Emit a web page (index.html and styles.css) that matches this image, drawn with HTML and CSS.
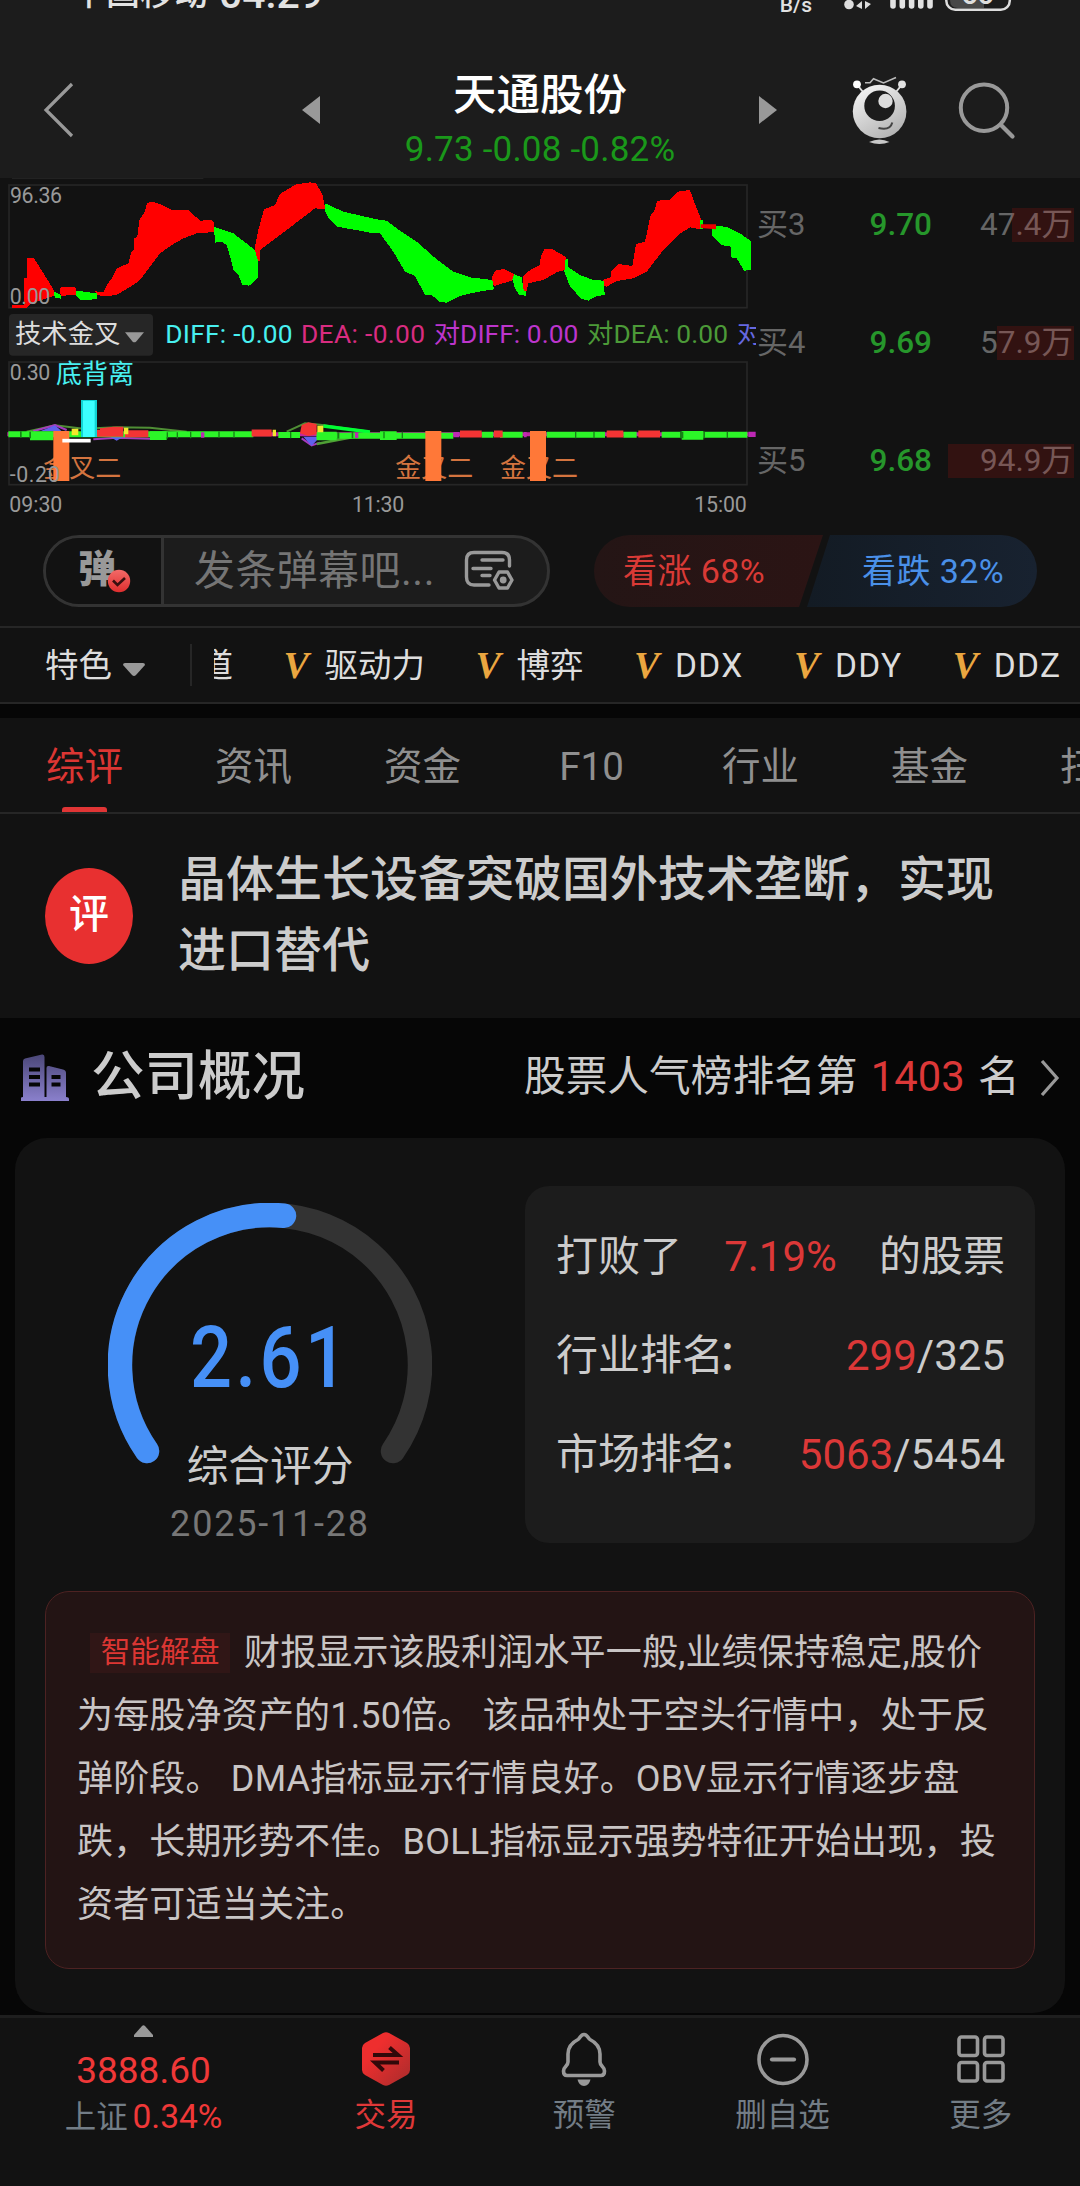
FILE: index.html
```html
<!DOCTYPE html>
<html lang="zh-CN">
<head>
<meta charset="utf-8">
<title>天通股份</title>
<link rel="stylesheet" href="styles.css">
</head>
<body>
<header class="top">
  <div class="status">
    <div class="status-left"><span class="carrier">中国移动</span><span class="clock">04:29</span></div>
    <div class="status-right">
      <span class="speed">B/s</span>
      <svg class="signal" width="170" height="14" viewBox="842 0 170 14">
        <circle cx="849" cy="4.5" r="4.8" fill="#ddd"/>
        <path d="M856 6l6-5v8zM871 4l-6 5v-8z" fill="#ddd"/>
        <path d="M893 -4V6M902.300 -4V6M911.600 -4V6M920.800 -4V6M930 -4V6" stroke="#e2e2e2" stroke-width="5.600" stroke-linecap="round"/>
        <path d="M950 -6H984V8H958Q950 8 950 0Z" fill="#484848"/>
        <rect x="946.300" y="-25" width="63.500" height="34.800" rx="9" fill="none" stroke="#ddd" stroke-width="2.500"/>
        <text x="977.500" y="4" text-anchor="middle" class="battery-text">66</text>
      </svg>
    </div>
  </div>
  <div class="title-bar">
    <svg class="icon-back" width="34" height="60" viewBox="0 0 34 60"><path d="M29 4L3 30L29 56" fill="none" stroke="#999" stroke-width="3.200"/></svg>
    <svg class="icon-prev" width="18" height="28" viewBox="0 0 18 28"><path d="M18 0V28L0 14Z" fill="#999"/></svg>
    <div class="stock">
      <h1>天通股份</h1>
      <p>9.73 -0.08 -0.82%</p>
    </div>
    <svg class="icon-next" width="18" height="28" viewBox="0 0 18 28"><path d="M0 0V28L18 14Z" fill="#999"/></svg>
    <svg class="icon-bot" width="60" height="72" viewBox="850 74 60 72">
      <defs><linearGradient id="bot" x1="0" y1="0" x2=".6" y2="1"><stop offset="0" stop-color="#fafafa"/><stop offset="1" stop-color="#b5b5b5"/></linearGradient></defs>
      <path d="M857 84.500L863 92M902 84.500L896 92" stroke="#ddd" stroke-width="2"/>
      <circle cx="857" cy="84.300" r="3.900" fill="#fff"/><circle cx="902" cy="84.300" r="3.900" fill="#e2e2e2"/>
      <path d="M865 82.700H870L873.500 78.700L883.500 83L896 77.500" fill="none" stroke="#bbb" stroke-width="1.600"/>
      <circle cx="879.600" cy="111.500" r="26.800" fill="url(#bot)"/>
      <circle cx="879.600" cy="105.800" r="15.300" fill="#1c1c1c"/>
      <circle cx="885.500" cy="101" r="7.200" fill="#ddd"/>
      <path d="M878.500 128Q890 131 892.300 122.500" fill="none" stroke="#444" stroke-width="2"/>
      <path d="M869 142Q879.500 137 889.500 142Q879.500 146 869 142Z" fill="#c8c8c8"/>
    </svg>
    <svg class="icon-search" width="60" height="60" viewBox="956 80 60 60"><circle cx="984" cy="107.700" r="23.200" fill="none" stroke="#999" stroke-width="4"/><path d="M1001 125L1012.500 136.500" stroke="#999" stroke-width="4.200" stroke-linecap="round"/></svg>
  </div>
</header>

<section class="market">
  <svg class="chart" width="756" height="340" viewBox="0 24 2268 1020">
    <g fill="none" stroke="#262626" stroke-width="5">
      <path d="M36 25H610" stroke-width="3"/>
      <rect x="27" y="45" width="2214" height="368"/>
      <rect x="27" y="576" width="2214" height="368"/>
    </g>
    <g fill="#f00" shape-rendering="crispEdges">
      <path d="M36 405H72V325H80V265H102L115 285L140 325L152 345L162 362V378L95 400L80 414H36Z"/>
      <path d="M180 356L186 350H222L228 356V374L182 378Z"/>
      <path d="M286 364L310 366L318 350L335 325L350 295L385 280L394 245L403 240V205L412 200L418 150L432 130L442 98L460 96L480 102L515 120L565 120L600 152L635 150L643 160V185L620 188L590 190L550 205L515 225L480 250L450 290L420 330L400 345L350 375L325 378L290 376Z"/>
      <path d="M764 235L775 180L792 118L825 105L840 72L888 43L930 37L948 40L968 75L976 118L945 115L860 180L780 240V272H768Z"/>
      <path d="M1477 320L1485 302L1512 297L1542 312V330L1485 347L1477 345Z"/>
      <path d="M1570 318L1582 305L1620 285L1622 262L1632 238L1655 236L1699 262L1700 298L1670 307L1630 330L1583 340L1582 365L1570 362Z"/>
      <path d="M1808 330L1832 322V305L1855 282L1897 288L1908 222L1935 215L1952 135L1962 125L1972 92L2010 90L2035 65L2070 60L2082 95L2102 145V178L2070 172L2042 190L1990 240L1940 305L1900 325L1850 333L1820 350L1808 345Z"/>
    </g>
    <g fill="#0f0" shape-rendering="crispEdges">
      <path d="M162 364L182 375V386L164 382Z"/>
      <path d="M228 362L290 370V388L240 390L228 375Z"/>
      <path d="M642 170L700 190L765 240L773 270V325L748 347L727 345L715 315L700 300L692 265L680 225L665 215L645 218Z"/>
      <path d="M975 100L1030 125L1130 148L1160 152L1190 175L1250 215L1310 268L1360 305L1410 322L1477 330L1482 358L1430 366L1380 378L1340 398L1320 396L1295 375H1275L1245 318L1215 305L1180 245L1140 190L1110 188L1080 182L1010 170L985 145L975 122Z"/>
      <path d="M1537 328L1542 312L1565 322L1571 360L1577 364V377L1558 375L1545 355Z"/>
      <path d="M1697 265L1703 268V290L1740 315L1780 330L1812 332L1814 375L1790 378L1765 392L1745 387L1710 350L1693 305Z"/>
      <path d="M2100 150H2110V178H2100Z"/>
      <path d="M2137 168L2180 170L2220 190L2252 213V300L2232 302L2210 265L2192 262V230L2165 225L2137 198Z"/>
    </g>
    <path d="M2102 163H2148V178L2102 174Z" fill="#e00"/>

    <g fill="#d4743f" class="mark">
      <text x="130" y="922">金叉二</text>
      <text x="1186" y="922">金叉二</text>
      <text x="1500" y="922">金叉二</text>
    </g>
    <path d="M80 785L165 766L250 776L350 772L450 773L560 785M860 785L915 760L960 764L1100 784" fill="none" stroke="#4f8f35" stroke-width="6"/>
    <path d="M100 784L165 765L200 780M280 808L350 803L450 806M905 805L935 826L960 818" fill="none" stroke="#a63ac0" stroke-width="6"/>
    <path d="M22 793H2245" stroke="#c026a0" stroke-width="12"/>
    <path d="M120 784L165 766L185 784ZM330 800L350 812L370 800ZM910 800L935 828L960 800Z" fill="#6060ee"/>
    <path d="M950 822L1080 797" stroke="#4f9f35" stroke-width="8"/>
    <path d="M970 768L1110 786" stroke="#0f3" stroke-width="10"/>
    <path d="M25 793H760M835 795H900M950 797H1360M1445 794H1480M1500 794H1568M1640 794H1815M1870 794H1910M1985 794H2242" stroke="#2cf528" stroke-width="18"/>
    <path d="M90 798H160M450 797H500M950 798H1010M1140 797H1190M2045 796H2110" stroke="#2cf528" stroke-width="26"/>
    <path d="M60 793H65M88 795H93M500 796H504M530 796H534M570 795H574M655 794H659M700 794H704M870 795H874M1012 796H1018M1055 795H1060M1150 795H1154M1205 795H1209M1725 795H1729M1780 795H1784M2040 795H2050M2110 795H2115M2180 795H2184" stroke="#168016" stroke-width="19"/>
    <path d="M285 790H300M375 791H445M755 789H815M1380 792H1445M1482 792H1508M1820 792H1870M1915 792H1980" stroke="#f43434" stroke-width="21"/>
    <path d="M300 775L340 770H370V800H300ZM905 765L925 757L950 762V793L925 798L900 790Z" fill="#f43434"/>
    <path d="M372 783H385M215 786H235M952 777H970M818 789H828" stroke="#f4e82c" stroke-width="20"/>
    <path d="M603 795H613M1065 796H1075M1360 794H1378M1572 794H1580M2245 793H2267" stroke="#bd28b4" stroke-width="16"/>
    <rect x="243" y="690" width="48" height="111" fill="#10d4d4"/><rect x="249" y="693" width="35" height="108" fill="#3cffff"/>
    <g fill="#ff7838"><rect x="160" y="783" width="48" height="150"/><rect x="1276" y="783" width="48" height="150"/><rect x="1590" y="783" width="48" height="150"/></g>
    <path d="M187 812H272" stroke="#fff" stroke-width="11"/>

    <g class="axis" fill="#999">
      <text x="30" y="98" textLength="156">96.36</text>
      <text x="29" y="403" textLength="122">0.00</text>
      <text x="29" y="629" textLength="122">0.30</text>
      <text x="29" y="935" textLength="150">-0.20</text>
      <text x="28" y="1025" textLength="159">09:30</text>
      <text x="1056" y="1025" textLength="157">11:30</text>
      <text x="2083" y="1025" textLength="157">15:00</text>
    </g>
    <rect x="27" y="432" width="432" height="125" rx="12" fill="#262626"/>
    <path d="M375 487H432L408 515Q403 519 398 515Z" fill="#999"/>
    <g class="legend">
      <text x="45" y="520" fill="#ddd">技术金叉</text>
      <text x="496" y="518" fill="#48f0f0" textLength="382">DIFF: -0.00</text>
      <text x="903" y="518" fill="#d92c80" textLength="372">DEA: -0.00</text>
      <text x="1301" y="518" fill="#bd35cc" textLength="434">对DIFF: 0.00</text>
      <text x="1761" y="518" fill="#4c9a38" textLength="423">对DEA: 0.00</text>
      <text x="2211" y="518" fill="#6668e0">对</text>
      <text x="168" y="640" fill="#48f0f0" class="mark">底背离</text>
    </g>
  </svg>
  <ul class="orders">
    <li><span>买3</span><b>9.70</b><em>47.4万<i style="width:62px"></i></em></li>
    <li><span>买4</span><b>9.69</b><em>57.9万<i style="width:77px"></i></em></li>
    <li><span>买5</span><b>9.68</b><em>94.9万<i style="width:126px"></i></em></li>
  </ul>
</section>

<section class="social">
  <div class="danmu">
    <div class="danmu-toggle">弹
      <svg class="check" width="24" height="24" viewBox="0 0 24 24"><defs><linearGradient id="chk" x1="0" y1="0" x2="0" y2="1"><stop offset="0" stop-color="#f36a68"/><stop offset="1" stop-color="#df2e2e"/></linearGradient></defs><circle cx="12" cy="12" r="11.200" fill="url(#chk)"/><path d="M6 11.500L10.500 16L18 9" fill="none" stroke="#3a0f0f" stroke-width="2.600"/></svg>
    </div>
    <div class="danmu-input"><span>发条弹幕吧...</span>
      <svg width="50" height="42" viewBox="464 551 50 42" fill="none" stroke="#999" stroke-width="3.400" stroke-linecap="round" stroke-linejoin="round"><path d="M509.500 567V561Q509.500 553.500 502 553.500H474Q466.500 553.500 466.500 561V578Q466.500 586 474 586H489M482 561H503M473 569.500H491M482 576.500H490"/><path d="M494.500 581L499 573H507.500L512 581L507.500 589H499Z"/><circle cx="503.200" cy="581" r="1.700"/></svg>
    </div>
  </div>
  <div class="vote"><div class="vote-up">看涨 68%</div><div class="vote-down">看跌 32%</div></div>
</section>

<section class="features">
  <div class="feature-pick">特色<svg width="22" height="14" viewBox="0 0 22 14"><path d="M0 2Q0 0 2 0H20Q22 0 22 2L13 12Q11 14 9 12Z" fill="#999"/></svg></div>
  <div class="feature-list">
    <span class="cut">道</span>
    <span><i>V</i>驱动力</span><span><i>V</i>博弈</span><span class="latin"><i>V</i>DDX</span><span class="latin"><i>V</i>DDY</span><span class="latin"><i>V</i>DDZ</span>
  </div>
</section>

<nav class="tabs"><a class="active">综评</a><a>资讯</a><a>资金</a><a>F10</a><a>行业</a><a>基金</a><a>扫雷</a></nav>

<section class="comment"><div class="badge">评</div><p>晶体生长设备突破国外技术垄断，实现<br>进口替代</p></section>

<section class="company">
  <div class="company-head">
    <svg width="50" height="50" viewBox="20 1053 50 50"><defs><linearGradient id="bld" x1="0" y1="0" x2="0" y2="1"><stop offset="0" stop-color="#4b4778"/><stop offset="1" stop-color="#8a80cc"/></linearGradient></defs><path fill="url(#bld)" fill-rule="evenodd" d="M21 1101V1098Q21 1097 23 1097V1061Q23 1059 25 1058.500L42 1054.500Q44.500 1054 44.500 1057V1097H46.500V1068Q46.500 1065.500 49 1066L63 1069.500Q66 1070 66 1073V1097Q69 1097 69 1099V1101ZM29 1067.500V1071.500H40V1067.500ZM29 1075V1079H40V1075ZM29 1082.500V1086.500H40V1082.500ZM51.500 1075V1079H60.500V1075ZM51.500 1082.500V1086.500H60.500V1082.500Z"/></svg>
    <h2>公司概况</h2>
    <p>股票人气榜排名第 <b>1403</b> 名</p>
    <svg width="20" height="36" viewBox="0 0 20 36"><path d="M2 1L17 18L2 35" fill="none" stroke="#999" stroke-width="3.200"/></svg>
  </div>
  <div class="card">
    <div class="card-top">
      <div class="score">
        <svg class="gauge" width="324" height="270" viewBox="108 1203 324 270" fill="none" stroke-width="24.500" stroke-linecap="round"><path d="M147 1451A150 150 0 1 1 393 1451" stroke="#333"/><path d="M147 1451A150 150 0 0 1 284 1215.700" stroke="#4690f7"/></svg>
        <strong>2.61</strong>
        <span>综合评分</span>
        <time>2025-11-28</time>
      </div>
      <div class="ranks">
        <div><span>打败了</span><b>7.19%</b><span>的股票</span></div>
        <div><span>行业排名<s>：</s></span><span><b>299</b>/325</span></div>
        <div><span>市场排名<s>：</s></span><span><b>5063</b>/5454</span></div>
      </div>
    </div>
    <p class="analysis"><span class="tag">智能解盘</span>财报显示该股利润水平一般,业绩保持稳定,股价<br>为每股净资产的1.50倍。 该品种处于空头行情中，处于反<br>弹阶段。 DMA指标显示行情良好。OBV显示行情逐步盘<br>跌，长期形势不佳。BOLL指标显示强势特征开始出现，投<br>资者可适当关注。</p>
  </div>
</section>

<nav class="bottom">
  <div class="index"><svg width="19" height="12" viewBox="0 0 19 12"><path d="M0 10L8 1Q9.500 -.5 11 1L19 10V12H0Z" fill="#999"/></svg><b>3888.60</b><p>上证 <em>0.34%</em></p></div>
  <a class="trade"><svg width="54" height="54" viewBox="0 0 54 54"><defs><linearGradient id="trd" x1="0" y1="0" x2="1" y2="1"><stop offset=".3" stop-color="#ee2e2e"/><stop offset="1" stop-color="#a82c2c"/></linearGradient></defs><path d="M24 1Q27 -.5 30 1L48 11Q51 13 51 16V38Q51 41 48 43L30 53Q27 54.500 24 53L6 43Q3 41 3 38V16Q3 13 6 11Z" fill="url(#trd)"/><path d="M14 23H39L30.500 15.500M40 30.500H16L24.500 38.500" fill="none" stroke="#32090a" stroke-width="4"/></svg>交易</a>
  <a><svg width="54" height="54" viewBox="0 0 54 54"><path d="M27 2.500C23.500 2.500 23.500 6 21 7.500C14 11 11 16 11 22V30C11 34 6.500 34.500 6.500 39Q6.500 43.500 10 43.500H44Q47.500 43.500 47.500 39C47.500 34.500 43 34 43 30V22C43 16 40 11 33 7.500C30.500 6 30.500 2.500 27 2.500Z" fill="none" stroke="#999" stroke-width="3.600"/><path d="M20.500 47.500H33.500Q32 54 27 54Q22 54 20.500 47.500Z" fill="#999"/></svg>预警</a>
  <a><svg width="54" height="54" viewBox="0 0 54 54"><circle cx="27" cy="27.500" r="24" fill="none" stroke="#999" stroke-width="3.600"/><path d="M16 27.500H38" stroke="#999" stroke-width="4.200" stroke-linecap="round"/></svg>删自选</a>
  <a><svg width="54" height="54" viewBox="0 0 54 54" fill="none" stroke="#999" stroke-width="3.600"><rect x="5" y="5" width="18.500" height="18.500" rx="2.500"/><rect x="30.500" y="5" width="18.500" height="18.500" rx="2.500"/><rect x="5" y="30.500" width="18.500" height="18.500" rx="2.500"/><rect x="30.500" y="30.500" width="18.500" height="18.500" rx="2.500"/></svg>更多</a>
</nav>
</body>
</html>
```
FILE: styles.css
```css
* { box-sizing: border-box; margin: 0; padding: 0; }
body {
  width: 1080px; height: 2186px; overflow: hidden;
  display: flex; flex-direction: column;
  background: #060606; color: #ccc;
  font-family: Roboto, "Noto Sans CJK SC", sans-serif;
}
svg { display: block; flex: none; }
b, em, i, strong { font-style: normal; font-weight: 400; }
s { text-decoration: none; }
ul { list-style: none; }
h1, h2 { font-weight: 500; }

/* status bar and title */
.top { height: 178px; background: #1c1c1c; color: #e2e2e2; }
.status { height: 20px; overflow: hidden; display: flex; justify-content: space-between; padding: 0 68px 0 72px; }
.status-left, .status-right { display: flex; }
.status-left { gap: 11px; }
.carrier, .clock { font-size: 34px; line-height: 40px; margin-top: -27px; height: 40px; font-weight: 500; }
.clock { font-size: 41px; margin-top: -26px; }
.speed { font-size: 21px; line-height: 24px; margin-top: -7px; height: 24px; font-weight: 500; margin-right: 30px; }
.battery-text { font: 700 28px Roboto, sans-serif; fill: #ddd; }
.title-bar { height: 158px; display: flex; align-items: flex-start; padding-left: 43px; }
.icon-back { margin-top: 60px; }
.icon-prev { margin: 76px 0 0 225px; }
.stock { width: 439px; text-align: center; padding-left: 1px; }
.stock h1 { font-size: 43.500px; line-height: 60px; margin-top: 46px; color: #fff; }
.stock p { font-size: 35px; line-height: 44px; margin-top: 2px; color: #1a981a; letter-spacing: .2px; }
.icon-next { margin-top: 76px; }
.icon-bot { margin: 54px 0 0 73px; }
.icon-search { margin: 60px 0 0 46px; }

/* chart and order book */
.market { height: 340px; background: #121212; display: flex; }
.chart text { font-family: Roboto, "Noto Sans CJK SC", sans-serif; }
.axis text { font-size: 64px; }
.legend text { font-size: 79px; }
.mark text, .legend text.mark { font-size: 78px; }
.orders { width: 324px; padding-top: 30px; display: flex; flex-direction: column; gap: 84px; font-size: 32px; line-height: 34px; }
.orders li { display: grid; grid-template-columns: 60px 115px 143px; height: 34px; color: #666; white-space: nowrap; }
.orders span { padding-left: 1px; font-size: 31px; }
.orders b { color: #26962b; text-align: right; margin-right: -1px; font-weight: 500; font-size: 31.500px; }
.orders em { position: relative; text-align: right; padding-right: 1px; font-size: 31.500px; }
.orders i { position: absolute; right: 0; top: 0; height: 34px; background: rgba(200, 20, 15, .18); }

/* bullet comments and vote */
.social { height: 108px; padding: 17px 43px 19px 43px; background: #121212; display: flex; justify-content: space-between; }
.danmu { width: 507px; border: 3px solid #333; border-radius: 36px; overflow: hidden; display: flex; background: #1c1c1c; }
.danmu-toggle { position: relative; width: 118px; border-right: 3px solid #333; background: #121212; padding-left: 32px; font-size: 38px; line-height: 63px; font-weight: 900; color: #999; }
.check { position: absolute; left: 61px; top: 31px; }
.danmu-input { flex: 1; display: flex; align-items: center; justify-content: space-between; padding: 0 33px 0 30px; font-size: 40.800px; line-height: 66px; color: #757575; white-space: nowrap; letter-spacing: .6px; }
.vote { display: flex; width: 443px; font-size: 34px; line-height: 72px; white-space: nowrap; letter-spacing: .4px; }
.vote-up { width: 229px; flex: none; padding-left: 29px; border-radius: 36px 0 0 36px; color: #d93a36; background: linear-gradient(90deg, #241515, #2b1414); clip-path: polygon(0 0, 100% 0, 205px 100%, 0 100%); }
.vote-down { width: 230px; flex: none; margin-left: -16px; padding-left: 55px; border-radius: 0 36px 36px 0; color: #4a90e8; background: linear-gradient(90deg, #131b24, #182230); clip-path: polygon(23px 0, 100% 0, 100% 100%, 0 100%); }

/* feature shortcuts */
.features { height: 78px; background: #121212; border-top: 2px solid #262626; border-bottom: 2px solid #262626; display: flex; align-items: center; color: #ddd; font-size: 33.500px; line-height: 40px; white-space: nowrap; }
.feature-pick { display: flex; align-items: center; gap: 11px; width: 192px; height: 42px; padding: 2px 0 0 45px; border-right: 2px solid #262626; }
.feature-pick svg { margin-top: 8px; }
.feature-list { margin-left: 22px; flex: 1; overflow: hidden; display: flex; gap: 50.500px; padding-top: 2px; }
.feature-list span { display: flex; }
.feature-list .latin { letter-spacing: 1.300px; }
.feature-list .cut { width: 19px; justify-content: flex-end; overflow: hidden; }
.feature-list i { width: 41px; font: italic 700 38px/38px "Liberation Serif", serif; color: #eaa640; }

/* section tabs */
.tabs { margin-top: 14px; height: 96px; background: #121212; border-bottom: 2px solid #262626; display: grid; grid-template-columns: repeat(7, 169px); color: #8f8f8f; font-size: 38.500px; line-height: 97px; text-align: center; overflow: hidden; }
.tabs .active { color: #dc3633; display: flex; flex-direction: column; align-items: center; height: 96px; }
.tabs .active::after { content: ""; margin-top: -8px; width: 45px; height: 5px; flex: none; border-radius: 3px 3px 0 0; background: #e03535; }

/* headline comment */
.comment { height: 204px; background: #121212; display: flex; align-items: center; padding-left: 45px; }
.badge { width: 88px; height: 96px; border-radius: 50%; background: #e83030; color: #fff; font-size: 40px; line-height: 93px; text-align: center; font-weight: 500; }
.comment p { margin: -3px 0 0 45px; font-size: 48px; line-height: 71px; font-weight: 500; color: #ccc; white-space: nowrap; }

/* company overview */
.company-head { height: 120px; display: flex; align-items: center; padding-left: 20px; white-space: nowrap; }
.company-head h2 { width: 214px; font-size: 53.500px; line-height: 70px; margin: -2px 0 0 21px; }
.company-head p { width: 516px; margin: -2px 0 0 219px; font-size: 41.700px; line-height: 60px; word-spacing: 3px; }
.company-head p b, .ranks b { color: #dc3838; }
.card { margin: 0 15px; height: 875px; padding: 48px 30px 0; border-radius: 32px; background: #121212; }
.card-top { display: flex; justify-content: space-between; height: 357px; }
.score { width: 450px; display: flex; flex-direction: column; align-items: center; padding-top: 17px; }
.score strong { font-size: 86px; line-height: 90px; margin-top: -160px; font-weight: 500; color: #4690f7; transform: scaleX(.86); letter-spacing: 4px; }
.score span { font-size: 41.700px; line-height: 50px; margin-top: 39px; }
.score time { font-size: 36px; line-height: 44px; margin-top: 10px; letter-spacing: 1.800px; color: #777; }
.ranks { width: 510px; padding: 21px 30px 0 31px; border-radius: 24px; background: #1c1c1c; font-size: 42px; line-height: 99px; white-space: nowrap; }
.ranks div { display: flex; justify-content: space-between; }
.ranks s { margin-left: -7px; }
.analysis { margin-top: 48px; height: 378px; padding: 30px 0 0 31px; border: 1.500px solid #4d2222; border-radius: 24px; background: #231414; font-size: 36px; line-height: 63px; letter-spacing: .18px; white-space: nowrap; color: #c9c5c5; }
.tag { display: inline-block; width: 140px; height: 40px; margin: 0 14px 0 13px; background: #301616; color: #dc3633; font-size: 29.700px; line-height: 38px; letter-spacing: 0; text-align: center; vertical-align: 3px; }
.analysis .tag { margin-top: -4px; }

/* bottom bar */
.bottom { margin-top: 2px; height: 171px; background: #121212; border-top: 3px solid #1e1e1e; display: grid; grid-template-columns: 287px repeat(4, 198.250px); color: #737d86; font-size: 31.500px; text-align: center; }
.bottom a { display: flex; flex-direction: column; align-items: center; padding-top: 14px; line-height: 40px; }
.bottom a svg { margin-bottom: 10px; }
.bottom .trade { color: #df3838; }
.index { display: flex; flex-direction: column; align-items: center; padding-top: 7px; }
.index b { font-size: 37px; line-height: 44px; margin-top: 12px; color: #f03838; }
.index p { line-height: 40px; margin-top: 4px; }
.index em { font-size: 33.500px; color: #f03838; margin-left: -3px; }
```
